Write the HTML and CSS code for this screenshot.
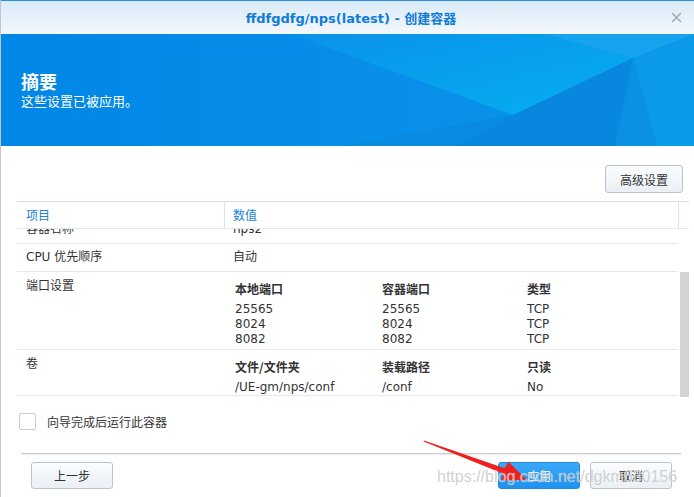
FILE: index.html
```html
<!DOCTYPE html>
<html lang="zh-CN">
<head>
<meta charset="utf-8">
<title>创建容器</title>
<link rel="stylesheet" href="styles.css">
</head>
<body>
<div class="window">
  <header class="titlebar">
    <span></span>
    <span class="title">ffdfgdfg/nps(latest) - 创建容器</span>
    <span class="close" aria-label="关闭">
      <svg width="11" height="11" viewBox="0 0 11 11"><path d="M1 1 L10 10 M10 1 L1 10" stroke="#a4abb3" stroke-width="1.6" fill="none"/></svg>
    </span>
  </header>

  <section class="banner">
    <svg class="facets" viewBox="0 0 694 112" preserveAspectRatio="none">
      <defs>
        <linearGradient id="base" x1="0" x2="1" y1="0" y2="0">
          <stop offset="0" stop-color="#0087e7"/>
          <stop offset="0.5" stop-color="#088ee9"/>
          <stop offset="1" stop-color="#0a96eb"/>
        </linearGradient>
        <linearGradient id="cy" x1="0" y1="0" x2="1" y2="1">
          <stop offset="0" stop-color="#0a92ea"/>
          <stop offset="1" stop-color="#06aff1"/>
        </linearGradient>
      </defs>
      <rect width="694" height="112" fill="url(#base)"/>
      <polygon points="290,0 545,0 633,24 513,81" fill="url(#cy)"/>
      <polygon points="545,0 694,0 633,24" fill="#17a4ee"/>
      <polygon points="633,24 694,0 694,112 657,112" fill="#0b9aea"/>
      <polygon points="513,81 633,24 615,112 455,112" fill="#0887de"/>
      <polygon points="633,24 657,112 615,112" fill="#0a91e4"/>
      <polygon points="340,112 513,81 455,112" fill="#098be1"/>
    </svg>
    <h1>摘要</h1>
    <p>这些设置已被应用。</p>
  </section>

  <main class="content">
    <div class="toolbar"><button class="btn adv">高级设置</button></div>

    <div class="grid">
      <div class="grid-head">
        <div class="hcell c1">项目</div>
        <div class="hcell c2">数值</div>
        <div class="hcell gutter"></div>
      </div>
      <div class="grid-body">
        <div class="viewport">
          <div class="rows">
            <div class="row"><div class="cell c1">容器名称</div><div class="cell c2">nps2</div></div>
            <div class="row"><div class="cell c1">CPU 优先顺序</div><div class="cell c2">自动</div></div>
            <div class="row tall ports">
              <div class="cell c1">端口设置</div>
              <div class="cell c2">
                <div class="sub">
                  <div class="th">本地端口</div><div class="th">容器端口</div><div class="th">类型</div>
                  <div class="td">25565</div><div class="td">25565</div><div class="td">TCP</div>
                  <div class="td">8024</div><div class="td">8024</div><div class="td">TCP</div>
                  <div class="td">8082</div><div class="td">8082</div><div class="td">TCP</div>
                </div>
              </div>
            </div>
            <div class="row tall">
              <div class="cell c1">卷</div>
              <div class="cell c2">
                <div class="sub">
                  <div class="th">文件/文件夹</div><div class="th">装载路径</div><div class="th">只读</div>
                  <div class="td">/UE-gm/nps/conf</div><div class="td">/conf</div><div class="td">No</div>
                </div>
              </div>
            </div>
          </div>
        </div>
        <div class="scrolltrack"><div class="thumb"></div></div>
      </div>
    </div>

    <label class="check"><span class="box"></span><span>向导完成后运行此容器</span></label>
  </main>

  <footer class="footer">
    <button class="btn wide">上一步</button>
    <span class="spacer"></span>
    <button class="btn wide primary">应用</button>
    <button class="btn wide">取消</button>
  </footer>
</div>

<svg class="arrow" viewBox="0 0 694 497" width="694" height="497">
  <polygon points="424,440.6 504.7,468.2 508.4,461.7 527,480 501,480.3 503.5,473.8 423.6,441.4" fill="#ef2020"/>
</svg>
<div class="watermark">https://blog.csdn.net/dgkm630156</div>
</body>
</html>
```

FILE: styles.css
```css
html, body {
  margin: 0;
  padding: 0;
}
body {
  width: 694px;
  height: 497px;
  overflow: hidden;
  position: relative;
  background: #fff;
  font-family: "DejaVu Sans", "Noto Sans CJK SC", sans-serif;
  font-size: 12px;
  color: #333;
}
.window {
  height: 497px;
  box-sizing: border-box;
  border-left: 1px solid #c2c6ca;
  display: flex;
  flex-direction: column;
  background: #fff;
}

/* title bar */
.titlebar {
  height: 34px;
  box-sizing: border-box;
  border-top: 1px solid #2a8fe2;
  background: linear-gradient(#d9eaf8, #f4f8fc);
  display: grid;
  grid-template-columns: 1fr auto 1fr;
  align-items: center;
}
.title {
  font-weight: bold;
  font-size: 13px;
  color: #0f7cd7;
  margin-left: 7px;
}
.close {
  justify-self: end;
  margin-right: 12px;
  display: flex;
}

/* banner */
.banner {
  height: 112px;
  box-sizing: border-box;
  position: relative;
  overflow: hidden;
  background: #0088e7;
  color: #fff;
  padding: 36px 0 0 20px;
}
.facets {
  position: absolute;
  left: 0;
  top: 0;
  width: 100%;
  height: 100%;
}
.banner h1, .banner p {
  position: relative;
  margin: 0;
  font-family: "Noto Sans CJK SC", sans-serif;
}
.banner h1 {
  font-size: 18px;
  line-height: 22px;
  font-weight: bold;
}
.banner p {
  font-size: 13px;
  line-height: 16px;
  margin-top: 1px;
}

/* content */
.content {
  padding: 19px 5px 0 16px;
}
.toolbar {
  display: flex;
  justify-content: flex-end;
  padding-right: 6px;
  margin-bottom: 8px;
}
.btn {
  font-family: "Noto Sans CJK SC", sans-serif;
  font-size: 12px;
  color: #333;
  border: 1px solid #b8c5d1;
  border-radius: 3px;
  background: linear-gradient(#fbfcfe, #eaf0f6);
  padding: 0;
  margin: 0;
}
.adv {
  width: 78px;
  height: 28px;
}
.wide {
  width: 82px;
  height: 27px;
}
.primary {
  color: #fff;
  border-color: #1f8ae2;
  background: linear-gradient(#3aa9f8, #1f92f0);
}

/* grid */
.grid {
  border-top: 1px solid #d4dfe9;
}
.grid-head {
  display: flex;
  height: 27px;
  box-sizing: border-box;
  border-bottom: 1px solid #dfe8f0;
}
.hcell {
  line-height: 26px;
  color: #1b7fd5;
  font-family: "Noto Sans CJK SC", sans-serif;
}
.hcell.c1 {
  width: 208px;
  box-sizing: border-box;
  padding-left: 9px;
  border-right: 1px solid #d8e5f1;
}
.hcell.c2 {
  width: 454px;
  box-sizing: border-box;
  padding-left: 8px;
  border-right: 1px solid #d8e5f1;
}
.hcell.gutter {
  flex: 1;
}
.grid-body {
  display: flex;
  height: 168px;
}
.viewport {
  flex: 1;
  overflow: hidden;
}
.rows {
  margin-top: -13px;
  margin-right: 2px;
}
.row {
  display: flex;
  border-bottom: 1px solid #e3e9ef;
  line-height: 27px;
}
.cell.c1 {
  width: 208px;
  box-sizing: border-box;
  padding-left: 9px;
}
.cell.c2 {
  flex: 1;
  padding-left: 8px;
}
.row.tall {
  line-height: 16px;
}
.row.tall .cell.c1 {
  padding-top: 6px;
}
.row.tall .cell.c2 {
  padding-top: 9px;
  padding-left: 10px;
}
.row.ports .cell.c2 {
  padding-bottom: 2px;
}
.sub {
  display: grid;
  grid-template-columns: 147px 145px auto;
}
.th {
  font-weight: bold;
  line-height: 16px;
  padding-bottom: 5px;
  font-family: "Noto Sans CJK SC", sans-serif;
}
.td {
  line-height: 15px;
}
.scrolltrack {
  width: 9px;
  padding-top: 43px;
  box-sizing: border-box;
}
.thumb {
  height: 125px;
  background: #d3d3d3;
}

/* checkbox */
.check {
  display: flex;
  align-items: center;
  margin: 16px 0 0 2px;
  font-family: "Noto Sans CJK SC", sans-serif;
  line-height: 17px;
}
.box {
  width: 17px;
  height: 17px;
  box-sizing: border-box;
  border: 1px solid #c4ced9;
  border-radius: 2px;
  margin-right: 11px;
  background: #fff;
}

/* footer */
.footer {
  margin: auto 13px 0 20px;
  border-top: 1px solid #cfcfcf;
  box-shadow: inset 0 1px #ececec;
  padding: 8px 9px 8px 10px;
  display: flex;
  gap: 10px;
}
.spacer {
  flex: 1;
}

/* overlays */
.arrow {
  position: absolute;
  left: 0;
  top: 0;
  pointer-events: none;
}
.watermark {
  position: absolute;
  left: 437px;
  top: 467px;
  font-family: "Liberation Sans", sans-serif;
  font-size: 16px;
  line-height: 20px;
  color: rgba(196, 196, 196, 0.8);
  text-shadow: 0 0 1px rgba(255, 255, 255, 0.6);
  pointer-events: none;
  white-space: nowrap;
}
```
